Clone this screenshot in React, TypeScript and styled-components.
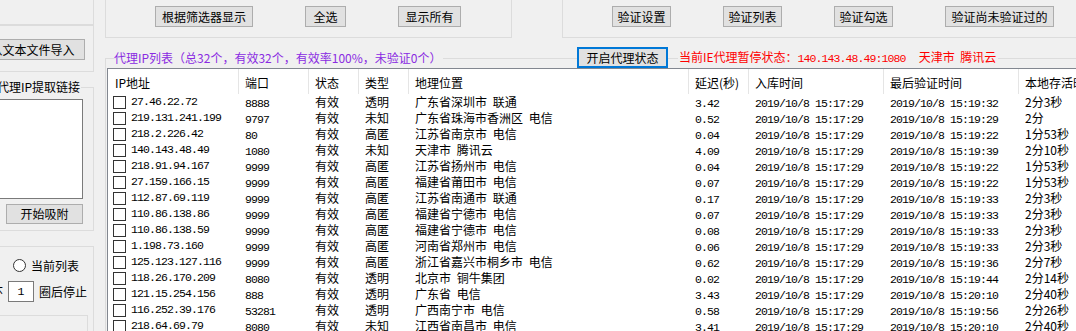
import React from "react";
import styled, { createGlobalStyle } from "styled-components";

const GlobalStyle = createGlobalStyle`
  html, body { margin: 0; padding: 0; background: #f0f0f0; }
  body {
    font-family: "Noto Sans CJK SC", "Noto Sans", sans-serif;
    font-size: 12px;
    color: #000;
  }
`;

const CJK = `"Noto Sans CJK SC", "Noto Sans", sans-serif`;

const Window = styled.div`
  width: 1076px;
  height: 331px;
  overflow: hidden;
  display: flex;
  background: #f0f0f0;
  font-family: ${CJK};
  font-size: 12px;
  line-height: 16px;
  color: #000;
`;

const Frame = styled.div`
  box-sizing: border-box;
  border: 1px solid #dcdcdc;
  flex-shrink: 0;
`;

const Btn = styled.button<{ $w: number; $h?: number; $focused?: boolean }>`
  box-sizing: border-box;
  width: ${(p) => p.$w}px;
  height: ${(p) => p.$h ?? 21}px;
  flex-shrink: 0;
  margin: 0;
  padding: 0;
  background: #e1e1e1;
  border: ${(p) => (p.$focused ? "2px solid #0078d7" : "1px solid #adadad")};
  font-family: ${CJK};
  font-size: 12px;
  line-height: 16px;
  color: #000;
  white-space: nowrap;
  overflow: hidden;
  display: flex;
  align-items: center;
  justify-content: center;
`;

const Mono = styled.span`
  font-family: "Liberation Mono", "DejaVu Sans Mono", monospace;
  font-size: 11.5px;
  letter-spacing: -0.9px;
`;

/* ---------- left panel ---------- */

const LeftPanel = styled.aside`
  width: 94px;
  flex-shrink: 0;
  overflow: hidden;
`;

const LeftInner = styled.div`
  width: 124px;
  margin-left: -30px;
  display: flex;
  flex-direction: column;
`;

const LeftTopBox = styled(Frame)`
  height: 25px;
  border-top: none;
`;

const ImportBox = styled(Frame)`
  height: 47px;
  display: flex;
  justify-content: flex-end;
  align-items: flex-start;
  padding: 13px 8px 0 0;
`;

const LinkBox = styled(Frame)`
  margin-top: 15px;
  height: 144px;
  display: flex;
  flex-direction: column;
  align-items: flex-end;
  padding: 0 10px 0 0;
`;

const Legend = styled.span`
  align-self: flex-start;
  margin: -9px 0 0 25px;
  padding: 0 1px;
  background: #f0f0f0;
  line-height: 16px;
  white-space: nowrap;
`;

const LinkInput = styled.textarea`
  box-sizing: border-box;
  width: 100%;
  height: 100px;
  margin: 4px 0 0 0;
  padding: 2px;
  resize: none;
  border: 1px solid #7a7a7a;
  background: #fff;
  font-family: ${CJK};
  font-size: 12px;
  outline: none;
`;

const StartBtn = styled(Btn)`
  margin-top: 5px;
`;

const LoopBox = styled(Frame)`
  margin-top: 15px;
  height: 120px;
  display: flex;
  flex-direction: column;
`;

const RadioRow = styled.label`
  display: flex;
  justify-content: flex-end;
  align-items: center;
  gap: 5px;
  height: 13px;
  margin-top: 12px;
  padding-right: 14px;
  white-space: nowrap;
`;

const RadioCircle = styled.span`
  box-sizing: border-box;
  width: 13px;
  height: 13px;
  border-radius: 50%;
  border: 1px solid #333;
  background: #fff;
  flex-shrink: 0;
`;

const LoopRow = styled.div`
  display: flex;
  justify-content: flex-end;
  align-items: center;
  height: 21px;
  margin-top: 9px;
  padding-right: 6px;
  white-space: nowrap;
`;

const LoopLabel = styled.span<{ $gap: number }>`
  margin-left: ${(p) => p.$gap}px;
`;

const CountInput = styled.input`
  box-sizing: border-box;
  width: 26px;
  height: 21px;
  margin: 0 0 0 5px;
  padding: 0;
  border: 1px solid #7a7a7a;
  background: #fff;
  text-align: center;
  font-family: "Liberation Mono", monospace;
  font-size: 11.5px;
  color: #000;
  outline: none;
`;

const InnerBox = styled(Frame)`
  margin: 13px 5px 0 0;
  height: 40px;
`;

/* ---------- main area ---------- */

const MainArea = styled.main`
  flex: 1;
  min-width: 0;
  margin-left: 11px;
  overflow: hidden;
  display: flex;
  flex-direction: column;
`;

const TopRow = styled.div`
  display: flex;
  height: 38px;
  flex-shrink: 0;
`;

const ButtonBox = styled(Frame)<{ $w: number; $offset?: number }>`
  width: ${(p) => p.$w}px;
  height: 38px;
  margin-left: ${(p) => p.$offset ?? 0}px;
  border-top: none;
  display: flex;
  align-items: flex-start;
  gap: 52px;
  padding: 6px 0 0 49px;
`;

const ListGroup = styled(Frame)`
  margin-top: 20px;
  width: 1000px;
  height: 300px;
  padding-left: 1px;
  display: flex;
  flex-direction: column;
`;

const GroupHead = styled.div`
  display: flex;
  align-items: center;
  height: 21px;
  margin-top: -12px;
  padding-left: 7px;
  flex-shrink: 0;
`;

const TitleSlot = styled.div`
  width: 463px;
  flex-shrink: 0;
  display: flex;
`;

const TitleText = styled.span`
  background: #f0f0f0;
  color: #8a2be2;
  padding-right: 2px;
  white-space: nowrap;
`;

const StatusText = styled.span`
  margin-left: 10px;
  padding: 0 2px 0 1px;
  background: #f0f0f0;
  color: #ff0000;
  white-space: nowrap;
`;

const Place = styled.span`
  margin-left: 13px;
  word-spacing: 3px;
`;

const ListView = styled.div`
  box-sizing: border-box;
  border: 1px solid #828790;
  background: #fff;
  height: 280px;
  overflow: hidden;
`;

const COLS = "131px 70px 50px 50px 280px 60px 135px 135px 110px";

const HeaderRow = styled.div`
  display: grid;
  grid-template-columns: ${COLS};
  height: 25px;
`;

const HeaderCell = styled.div<{ $first?: boolean }>`
  box-sizing: border-box;
  display: flex;
  align-items: center;
  padding: 2px 0 0 ${(p) => (p.$first ? 7 : 6)}px;
  border-right: 1px solid #e5e5e5;
  white-space: nowrap;
  overflow: hidden;
`;

const Row = styled.div`
  display: grid;
  grid-template-columns: ${COLS};
  height: 16px;
  line-height: 16px;
`;

const Cell = styled.div`
  padding-left: 6px;
  white-space: nowrap;
  overflow: hidden;
`;

const PlaceCell = styled(Cell)`
  word-spacing: 3px;
`;

const IpCell = styled.div`
  display: flex;
  align-items: center;
  gap: 5px;
  padding-left: 5px;
  white-space: nowrap;
`;

const Check = styled.span`
  box-sizing: border-box;
  width: 13px;
  height: 13px;
  border: 1px solid #333;
  background: #fff;
  flex-shrink: 0;
`;

type Proxy = [string, string, string, string, string, string, string, string];

const rows: Proxy[] = [
  ["27.46.22.72", "8888", "有效", "透明", "广东省深圳市 联通", "3.42", "15:19:32", "2分3秒"],
  ["219.131.241.199", "9797", "有效", "未知", "广东省珠海市香洲区 电信", "0.52", "15:19:29", "2分"],
  ["218.2.226.42", "80", "有效", "高匿", "江苏省南京市 电信", "0.04", "15:19:22", "1分53秒"],
  ["140.143.48.49", "1080", "有效", "未知", "天津市 腾讯云", "4.09", "15:19:39", "2分10秒"],
  ["218.91.94.167", "9999", "有效", "高匿", "江苏省扬州市 电信", "0.04", "15:19:22", "1分53秒"],
  ["27.159.166.15", "9999", "有效", "高匿", "福建省莆田市 电信", "0.07", "15:19:22", "1分53秒"],
  ["112.87.69.119", "9999", "有效", "高匿", "江苏省南通市 联通", "0.17", "15:19:33", "2分3秒"],
  ["110.86.138.86", "9999", "有效", "高匿", "福建省宁德市 电信", "0.07", "15:19:33", "2分3秒"],
  ["110.86.138.59", "9999", "有效", "高匿", "福建省宁德市 电信", "0.08", "15:19:33", "2分3秒"],
  ["1.198.73.160", "9999", "有效", "高匿", "河南省郑州市 电信", "0.06", "15:19:33", "2分3秒"],
  ["125.123.127.116", "9999", "有效", "高匿", "浙江省嘉兴市桐乡市 电信", "0.62", "15:19:36", "2分7秒"],
  ["118.26.170.209", "8080", "有效", "透明", "北京市 铜牛集团", "0.02", "15:19:44", "2分14秒"],
  ["121.15.254.156", "888", "有效", "透明", "广东省 电信", "3.43", "15:20:10", "2分40秒"],
  ["116.252.39.176", "53281", "有效", "透明", "广西南宁市 电信", "0.58", "15:19:56", "2分26秒"],
  ["218.64.69.79", "8080", "有效", "未知", "江西省南昌市 电信", "3.41", "15:20:10", "2分40秒"],
];

const headers = ["IP地址", "端口", "状态", "类型", "地理位置", "延迟(秒)", "入库时间", "最后验证时间", "本地存活时间"];

export default function App() {
  return (
    <>
      <GlobalStyle />
      <Window>
        <LeftPanel>
          <LeftInner>
            <LeftTopBox />
            <ImportBox>
              <Btn $w={105}>从文本文件导入</Btn>
            </ImportBox>
            <LinkBox>
              <Legend>代理IP提取链接</Legend>
              <LinkInput />
              <StartBtn $w={77} $h={20}>开始吸附</StartBtn>
            </LinkBox>
            <LoopBox>
              <RadioRow>
                <RadioCircle />
                <span>当前列表</span>
              </RadioRow>
              <LoopRow>
                <span>循环</span>
                <CountInput value="1" readOnly />
                <LoopLabel $gap={5}>圈后停止</LoopLabel>
              </LoopRow>
              <InnerBox />
            </LoopBox>
          </LeftInner>
        </LeftPanel>

        <MainArea>
          <TopRow>
            <ButtonBox $w={407}>
              <Btn $w={98}>根据筛选器显示</Btn>
              <Btn $w={41}>全选</Btn>
              <Btn $w={63}>显示所有</Btn>
            </ButtonBox>
            <ButtonBox $w={540} $offset={50}>
              <Btn $w={59}>验证设置</Btn>
              <Btn $w={59}>验证列表</Btn>
              <Btn $w={59}>验证勾选</Btn>
              <Btn $w={109}>验证尚未验证过的</Btn>
            </ButtonBox>
          </TopRow>

          <ListGroup>
            <GroupHead>
              <TitleSlot>
                <TitleText>代理IP列表（总32个，有效32个，有效率100%，未验证0个）</TitleText>
              </TitleSlot>
              <Btn $w={91} $focused>开启代理状态</Btn>
              <StatusText>
                当前IE代理暂停状态：<Mono>140.143.48.49:1080</Mono>
                <Place>天津市 腾讯云</Place>
              </StatusText>
            </GroupHead>
            <ListView>
              <HeaderRow>
                {headers.map((h, i) => (
                  <HeaderCell key={h} $first={i === 0}>
                    {h}
                  </HeaderCell>
                ))}
              </HeaderRow>
              {rows.map((r) => (
                <Row key={r[0]}>
                  <IpCell>
                    <Check />
                    <Mono>{r[0]}</Mono>
                  </IpCell>
                  <Cell>
                    <Mono>{r[1]}</Mono>
                  </Cell>
                  <Cell>{r[2]}</Cell>
                  <Cell>{r[3]}</Cell>
                  <PlaceCell>{r[4]}</PlaceCell>
                  <Cell>
                    <Mono>{r[5]}</Mono>
                  </Cell>
                  <Cell>
                    <Mono>2019/10/8 15:17:29</Mono>
                  </Cell>
                  <Cell>
                    <Mono>2019/10/8 {r[6]}</Mono>
                  </Cell>
                  <Cell>{r[7]}</Cell>
                </Row>
              ))}
            </ListView>
          </ListGroup>
        </MainArea>
      </Window>
    </>
  );
}
